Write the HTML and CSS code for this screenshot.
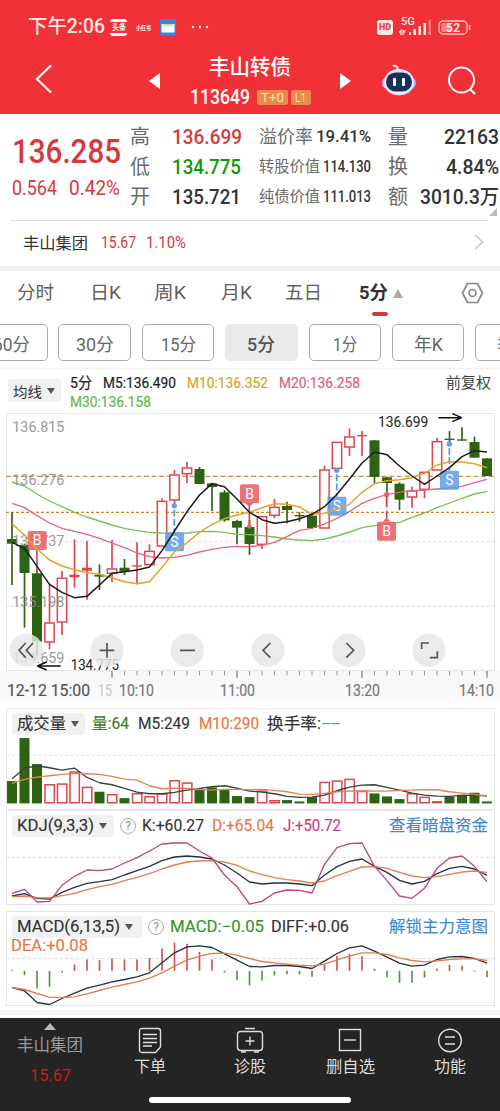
FILE: index.html
```html
<!DOCTYPE html>
<html lang="zh-CN">
<head>
<meta charset="utf-8">
<title>丰山转债 113649</title>
<link rel="stylesheet" href="styles.css">
</head>
<body>
<header class="top">
  <div class="status">
    <span class="clock" data-w="77">下午2:06</span>
    <span class="news"><b data-w="14">头条</b></span>
    <span class="mini" data-w="15">小红书</span>
    <svg class="app" width="16" height="16" viewBox="0 0 16 16"><rect width="16" height="16" rx="2" fill="#2b8be8"/><path d="M1.500 5h13v8.500h-13z" fill="#fff"/><path d="M2 3.500h12l-1 3.500h-10z" fill="#c9dccb"/><path d="M2 4h12" stroke="#3d7185" stroke-width="1.500"/></svg>
    <svg class="dots" width="18" height="4" viewBox="0 0 18 4" fill="#fff"><circle cx="2" cy="2" r="1.200"/><circle cx="9" cy="2" r="1.200"/><circle cx="16" cy="2" r="1.200"/></svg>
    <span class="hd"><b data-w="12">HD</b></span>
    <span class="signal"><i data-w="14">5G</i>
      <svg width="34" height="17" viewBox="0 0 34 17" fill="#ffe9e5"><path d="M0 13.500l2-2v4.500M4 16v-4.500l2 2M7 11.500h-1" fill="none" stroke="#ffe9e5" stroke-width="1.200"/><path d="M10 13h2v3h-2zM14.500 10h2.500v6h-2.500zM19.500 7h2.500v9h-2.500zM24.500 4h2.500v12h-2.500z"/><path d="M29.500 1h2.500v15h-2.500z" opacity=".4"/></svg>
    </span>
    <svg class="battery" width="33" height="15" viewBox="0 0 33 15"><rect x="1" y="1" width="28" height="13" rx="4" fill="none" stroke="#ffc9c5" stroke-width="1.300"/><path d="M5 3h8v9h-8q-2 0-2-2v-5q0-2 2-2z" fill="#ff7c7c"/><path d="M31.500 5v5" stroke="#ffc9c5" stroke-width="1.500"/><text x="8" y="12" font-size="12" font-weight="500" fill="#fff" textLength="14">52</text></svg>
  </div>
  <div class="nav">
    <svg class="back" width="17" height="30" viewBox="0 0 17 30"><path d="M16 1.500L2 15l14 13.500" fill="none" stroke="#fff" stroke-width="2.200"/></svg>
    <svg class="prev" width="11" height="16" viewBox="0 0 11 16"><path d="M11 0v16L0 8z" fill="#fff"/></svg>
    <div class="title">
      <h1 data-w="82">丰山转债</h1>
      <div class="code"><span class="num" data-w="60">113649</span><span class="tag t0"><b data-w="23">T+0</b></span><span class="tag l1"><b data-w="11">L1</b></span></div>
    </div>
    <svg class="next" width="11" height="16" viewBox="0 0 11 16"><path d="M0 0v16l11-8z" fill="#fff"/></svg>
    <svg class="robot" width="34" height="32" viewBox="0 0 34 32"><path d="M11 2q4-1 5 3" fill="none" stroke="#eee" stroke-width="2"/><ellipse cx="3.500" cy="19" rx="3.500" ry="5" fill="#d7b9f5"/><ellipse cx="30.500" cy="19" rx="3.500" ry="5" fill="#b6a4f4"/><ellipse cx="17" cy="18" rx="15" ry="13" fill="#f3f1fc"/><ellipse cx="17" cy="19" rx="15" ry="12" fill="none" stroke="#d7d1f4"/><rect x="4" y="8.500" width="26" height="19" rx="9.500" fill="#17315f"/><rect x="11" y="14" width="3" height="8" rx="1" fill="#fff"/><rect x="20" y="14" width="3" height="8" rx="1" fill="#fff"/></svg>
    <svg class="search" width="28" height="29" viewBox="0 0 28 29" fill="none" stroke="#fff" stroke-width="2"><circle cx="13.500" cy="14" r="12.500"/><path d="M22 23l5 5"/></svg>
  </div>
</header>

<section class="quote">
  <div class="last"><strong data-w="109">136.285</strong><div class="chg"><span data-w="45">0.564</span><span data-w="51">0.42%</span></div></div>
  <dl class="pairs hl"><dt>高</dt><dd class="red"><span data-w="70">136.699</span></dd><dt>低</dt><dd class="green"><span data-w="69">134.775</span></dd><dt>开</dt><dd><span data-w="69">135.721</span></dd></dl>
  <dl class="pairs value"><dt class="wide"><span data-w="54">溢价率</span></dt><dd><span data-w="55">19.41%</span></dd><dt><span data-w="61">转股价值</span></dt><dd><span data-w="48">114.130</span></dd><dt><span data-w="61">纯债价值</span></dt><dd><span data-w="48">111.013</span></dd></dl>
  <dl class="pairs flow"><dt>量</dt><dd><span data-w="55">22163</span></dd><dt>换</dt><dd><span data-w="53">4.84%</span></dd><dt>额</dt><dd><span data-w="79">3010.3万</span></dd></dl>
  <i class="corner"></i>
</section>
<section class="related"><span class="name" data-w="65">丰山集团</span><span class="p" data-w="35">15.67</span><span class="p" data-w="40">1.10%</span><svg width="10" height="16" viewBox="0 0 10 16"><path d="M1 1l7.500 7L1 15" fill="none" stroke="#c4c4c4" stroke-width="1.500"/></svg></section>

<nav class="tabs"><span data-w="37">分时</span><span data-w="31">日K</span><span data-w="32">周K</span><span data-w="31">月K</span><span data-w="37">五日</span><span class="on" data-w="29">5分</span><svg width="10" height="9" viewBox="0 0 10 9"><path d="M5 0l5 9H0z" fill="#aaa"/></svg><svg width="23" height="22" viewBox="0 0 23 22" fill="none" stroke="#888" stroke-width="1.700"><path d="M6.500 1.500h10l5 9.500-5 9.500h-10L1.500 11z" stroke-linejoin="round"/><circle cx="11.500" cy="11" r="3.500"/></svg></nav>
<div class="underline"></div>
<div class="chips"><span><b data-w="37">60分</b></span><span><b data-w="38">30分</b></span><span><b data-w="35">15分</b></span><span class="on"><b data-w="28">5分</b></span><span><b data-w="24">1分</b></span><span><b data-w="29">年K</b></span><span><b data-w="29">季K</b></span></div>

<section class="ma"><span class="pick"><b data-w="29">均线</b><i></i></span>
  <div class="legend"><span data-w="22">5分</span><span data-w="73">M5:136.490</span><span class="gold" data-w="81">M10:136.352</span><span class="pink" data-w="81">M20:136.258</span><span class="lime" data-w="81">M30:136.158</span></div>
  <span class="adj" data-w="45">前复权</span>
</section>

<div class="panel main"><svg id="price" viewBox="18 24 1467 774"></svg></div>
<div class="axis"><svg id="ticks" width="500" height="9" viewBox="0 0 1500 27"></svg><div class="times"><span class="dark" data-w="83">12-12 15:00</span><span class="faint" data-w="14">15</span><span data-w="35">10:10</span><span data-w="35">11:00</span><span data-w="35">13:20</span><span data-w="35">14:10</span></div></div>

<div class="panel vol"><svg id="volume" viewBox="18 24 1467 304"></svg>
  <div class="head"><span class="pick"><b data-w="49">成交量</b><i></i></span><span class="green2" data-w="37">量:64</span><span class="m5" data-w="52">M5:249</span><span class="orange" data-w="60">M10:290</span><span class="turn" data-w="54">换手率:</span><span class="blue" data-w="18">--</span></div></div>
<div class="panel kdj"><svg id="kdj" viewBox="18 13 1467 285"></svg>
  <div class="head"><span class="pick"><b data-w="77">KDJ(9,3,3)</b><i></i></span><span class="q">?</span><span data-w="62">K:+60.27</span><span class="orange" data-w="62">D:+65.04</span><span class="magenta" data-w="58">J:+50.72</span><span class="link" data-w="99">查看暗盘资金</span></div></div>
<div class="panel macd"><svg id="macd" viewBox="18 318 1467 284"></svg>
  <div class="head"><span class="pick"><b data-w="103">MACD(6,13,5)</b><i></i></span><span class="q">?</span><span class="green3" data-w="94">MACD:−0.05</span><span data-w="78">DIFF:+0.06</span><span class="link" data-w="99">解锁主力意图</span><span class="orange dea" data-w="77">DEA:+0.08</span></div></div>

<div class="band"></div>
<footer class="bar">
  <div class="stock"><i class="up"></i><span data-w="66">丰山集团</span><em data-w="41">15.67</em></div>
  <div class="item"><svg width="24" height="27" viewBox="0 0 24 27"><path d="M4 1.500h16q2.500 0 2.500 2.500v16l-5 5.500h-13.500q-2.500 0-2.500-2.500v-19q0-2.500 2.500-2.500zM5 7.500h14M5 11.500h14M5 15.500h14M5 19h9"/></svg><span data-w="32">下单</span></div>
  <div class="item"><svg width="28" height="27" viewBox="0 0 28 27"><rect x="1.500" y="4.500" width="25" height="19" rx="3"/><path d="M9 1.500h10M5 25h5M18 25h5M14 9.500v9M9.500 14h9"/></svg><span data-w="32">诊股</span></div>
  <div class="item"><svg width="24" height="27" viewBox="0 0 24 27"><rect x="1.500" y="2.500" width="21" height="21"/><path d="M6 13h12"/></svg><span data-w="49">删自选</span></div>
  <div class="item"><svg width="26" height="27" viewBox="0 0 26 27"><circle cx="13" cy="13.500" r="11.300"/><path d="M8 10h10M8 17h10"/></svg><span data-w="32">功能</span></div>
  <i class="home"></i>
</footer>
<script src="charts.js"></script>
</body>
</html>
```
FILE: styles.css
```css
* { box-sizing: border-box; }
body { margin: 0; width: 500px; height: 1111px; overflow: hidden; background: #fff; color: #333; font-family: Roboto, "Noto Sans CJK SC", sans-serif; }
h1, dl, dd { margin: 0; }
i, em { font-style: normal; }
b { font-weight: inherit; }
svg { display: block; flex: none; }
[data-w] { display: inline-block; white-space: nowrap; transform-origin: 0 50%; flex: none; }
.red { color: #d43a40; }
.green { color: #0a9d0a; }
.green2 { color: #3d7a1c; }
.green3 { color: #34962a; }
.orange { color: #ec7440; }
.magenta { color: #c43c83; }
.blue { color: #44a0dc; }
.gold { color: #d9a51c; }
.pink { color: #e2617d; }
.lime { color: #63b946; }

.top { height: 114px; background: #f23037; color: #fff; }
.status { display: flex; align-items: center; height: 54px; padding-left: 28px; }
.clock { font-size: 19.5px; line-height: 24px; color: #ffe9e7; font-weight: 500; }
.news { width: 17px; height: 17px; margin-left: 5px; padding: 5px 1px 0 2px; border-top: 3px solid #fff; border-bottom: 3px solid #fff; border-radius: 3px; font-size: 8px; line-height: 1px; font-weight: 700; }
.mini { margin-left: 9px; font-size: 6px; font-weight: 700; }
.app { margin-left: 9px; }
.dots { margin-left: 15px; }
.hd { width: 16px; margin-left: 168px; padding: 0 2px; height: 15px; border-radius: 3px; background: #ffe9e5; color: #ed3d42; font-size: 9px; line-height: 15px; font-weight: 900; }
.signal { display: grid; margin-left: 6px; }
.signal > * { grid-area: 1 / 1; }
.signal i { margin-top: -1px; margin-left: 2px; font-size: 10px; line-height: 9px; height: 9px; color: #ffe9e5; font-weight: 500; }
.signal svg { margin-top: 1px; }
.battery { margin-left: 5px; }
.nav { display: grid; grid-template-columns: 114px 40px 151px 42px 66px 28px; padding-left: 35px; height: 60px; }
.back { margin-top: 10px; }
.prev, .next { margin-top: 19px; }
.title { width: 122px; text-align: center; }
h1 { font-size: 21px; line-height: 26px; font-weight: 500; }
.code { display: flex; align-items: center; height: 34px; padding-left: 1px; }
.num { font-size: 19.500px; font-weight: 500; }
.tag { display: flex; height: 15px; background: #e9894a; color: #ffe0ad; border-radius: 2px; font-size: 13px; line-height: 15px; padding-left: 4px; }
.t0 { width: 31px; margin-left: 7px; }
.l1 { width: 20px; margin-left: 3px; }
.robot { margin-top: 10px; }
.search { margin-top: 12px; }

.quote { position: relative; display: grid; grid-template-columns: 130px 129px 129px 112px; height: 106px; }
.last { padding: 16px 0 0 12px; color: #d9363d; }
.last strong { font-size: 34px; line-height: 42px; font-weight: 500; }
.chg { display: flex; gap: 12px; font-size: 20px; line-height: 32px; font-weight: 400; }
.pairs { display: grid; align-content: start; grid-auto-rows: 30px; padding-top: 8px; line-height: 30px; }
.pairs dt { color: #6a6a6a; font-size: 20px; font-weight: 400; }
.pairs dd { font-size: 20px; font-weight: 500; }
.hl { grid-template-columns: 42px 1fr; }
.value { grid-template-columns: 64px 48px; }
.value dt { font-size: 15.500px; }
.value .wide { font-size: 18px; }
.value dd { display: flex; justify-content: flex-end; font-size: 16px; }
.flow { grid-template-columns: 20px 91px; }
.flow dd { display: flex; justify-content: flex-end; }
.corner { position: absolute; right: 3px; bottom: 4px; border-left: 8px solid transparent; border-bottom: 8px solid #bbb; }
.related { display: flex; align-items: center; margin: 0 12px 0 10px; height: 46px; border-top: 1px solid #ddd; padding: 0 4px 3px 13px; }
.name { font-size: 16px; }
.p { margin-left: 13px; font-size: 16px; color: #d43a40; }
.p + .p { margin-left: 10px; }
.related svg { margin-left: auto; }

.tabs { display: grid; align-items: center; grid-template-columns: 73px 64px 67px 64px 74px 34px 68px 24px; height: 46px; padding: 3px 0 0 17px; border-top: 5px solid #f2f2f2; font-size: 18.5px; line-height: 24px; color: #606060; }
.tabs .on { font-weight: 700; color: #333; }
.underline { width: 16px; height: 4px; margin-left: 372px; border-radius: 2px; background: #c93941; }
.chips { display: flex; gap: 10.900px; margin-top: 8px; height: 37px; overflow: hidden; }
.chips > span { display: flex; justify-content: center; align-items: center; flex: none; width: 72.500px; border: 1px solid #aaa; border-radius: 5px; font-size: 18px; color: #666; }
.chips > span:first-child { margin-left: -25px; }
.chips > .on { background: #eaeaea; border-color: #eaeaea; font-weight: 500; color: #555; }

.ma { display: flex; margin-top: 7px; height: 45px; border-top: 1px solid #f0f0f0; padding: 5px 9px 0 8px; color: #222; }
.pick { display: flex; align-items: center; flex: none; height: 23px; padding-left: 5px; background: #f1f1f1; border-radius: 3px; color: #333; }
.pick i { margin-left: 5px; border: 4.500px solid transparent; border-top: 6px solid #555; border-bottom: 0; }
.ma .pick { width: 53px; margin-top: 5px; font-size: 14px; }
.legend { display: flex; flex-wrap: wrap; align-content: flex-start; column-gap: 11px; width: 330px; margin-left: 9px; height: 38px; font-size: 15px; line-height: 19px; }
.legend span { -webkit-text-stroke: .2px currentColor; }
.adj { margin-left: auto; font-size: 15px; line-height: 19px; color: #444; }
.panel { display: grid; width: 489px; margin-left: 6px; overflow: hidden; box-shadow: inset 0 0 0 1px #e6e6e6; }
.panel > * { grid-area: 1 / 1; }
.panel > svg { width: 489px; height: 100%; }
.main { height: 258px; }
.axis { height: 37px; background: linear-gradient(#f7f7f7, #fbfbfb 29px, #fff 30px); }
.times { display: flex; font-size: 16px; line-height: 21px; color: #777; padding-left: 7px; font-weight: 400; -webkit-text-stroke: .2px currentColor; }
.dark { color: #555; }
.faint { color: #ccc; margin-left: 8px; }
.times span:nth-child(3) { margin-left: 7px; }
.times span:nth-child(4) { margin-left: 66px; }
.times span:nth-child(5) { margin-left: 90px; }
.times span:nth-child(6) { margin-left: 79px; }
.vol { height: 101.500px; }
.kdj { height: 95px; margin-bottom: 6.500px; }
.macd { height: 95px; }
.head { display: flex; flex-wrap: wrap; align-content: flex-start; align-items: center; padding: 5px 7px 0 6px; font-size: 16px; line-height: 22px; height: 46px; }
.head .pick { font-size: 16px; height: 22px; }
.head > span { -webkit-text-stroke: .15px currentColor; }
.vol .pick { width: 73px; margin-right: 7px; }
.vol .m5, .vol .orange { margin-left: 9px; }
.vol .turn { margin-left: 8px; }
.vol .blue { margin-left: 1px; }
.kdj .pick { width: 102px; margin-right: 6px; }
.macd .pick { width: 130px; margin-right: 6px; }
.q { width: 16px; height: 16px; border: 1px solid #aaa; border-radius: 50%; text-align: center; font-size: 12px; line-height: 14px; color: #999; margin-right: 6px; }
.kdj .orange { margin-left: 8px; }
.kdj .magenta { margin-left: 9px; }
.green3 + span { margin-left: 7px; }
.head .link { margin-left: auto; color: #3f88cf; }
.dea { line-height: 16px; margin-left: -1px; }

.band { height: 5px; margin-top: 4px; background: #f3f3f3; }
.bar { position: relative; display: grid; grid-template-columns: repeat(5, 100px); height: 93px; margin-top: 3px; background: #242424; color: #ddd; }
.bar > div { display: flex; flex-direction: column; align-items: center; }
.up { margin-top: 5px; border: 6px solid transparent; border-bottom: 7px solid #bbb; border-top: 0; }
.stock span { margin-top: 4px; color: #999; font-size: 16.500px; line-height: 24px; }
.stock em { margin-top: 5px; color: #c41b1b; font-size: 17px; line-height: 24px; }
.item svg { margin-top: 9px; fill: none; stroke: #ddd; stroke-width: 1.400; }
.item span { margin-top: 1px; font-size: 16px; line-height: 24px; }
.home { position: absolute; left: 149px; top: 79px; width: 202px; height: 6px; border-radius: 3px; background: #fff; }
```
FILE: charts.js
```javascript
// Squeeze each label to its column width while keeping the flow box in step.
document.querySelectorAll('[data-w]').forEach(function (el) {
  var w = +el.dataset.w, range = document.createRange();
  range.selectNodeContents(el);
  var n = range.getBoundingClientRect().width;
  el.style.width = n + 'px';
  el.style.marginRight = (w - n) + 'px';
  el.style.transform = 'scaleX(' + w / n + ')';
});

// Chart space: three units per pixel, one slot every 37.5 units.
var RED = '#dc4650', GREEN = '#2d6412';
function X(i) { return 36 + 37.5 * i; }
function rect(x, y, w, h, a) { return '<rect x="' + x + '" y="' + y + '" width="' + w + '" height="' + h + '" ' + a + '/>'; }
function seg(x1, y1, x2, y2, c, w, d) { return '<path d="M' + x1 + ' ' + y1 + 'L' + x2 + ' ' + y2 + '" stroke="' + c + '" stroke-width="' + w + '"' + (d ? ' stroke-dasharray="' + d + '"' : '') + ' fill="none"/>'; }
function line(ys, c, w) { return '<polyline fill="none" stroke-linejoin="round" stroke="' + c + '" stroke-width="' + (w || 4) + '" points="' + ys.map(function (y, i) { return X(i) + ',' + y; }).join(' ') + '"/>'; }
function text(x, y, s, len, size, fill, extra) { return '<text x="' + x + '" y="' + y + '" font-size="' + size + '" fill="' + fill + '" textLength="' + len + '" lengthAdjust="spacingAndGlyphs" ' + (extra || '') + '>' + s + '</text>'; }

var candles = [
  ['g',322,402,416,540],['g',416,420,504,668],['g',495,505,710,755],['r',535,652,712,732],['r',498,518,652,690],
  ['r',403,509,517,548],['r',408,488,497,584],['g',478,509,515,555],['r',405,490,506,532],['g',462,488,500,510],
  ['r',412,481,485,538],['r',418,437,480,480],['r',280,287,424,424],['r',195,208,286,300],['r',170,187,207,234],
  ['g',186,192,237,237],['g',233,235,246,318],['g',255,262,346,350],['g',344,348,368,418],['g',345,366,417,450],
  ['r',333,333,419,432],['r',282,305,332,340],['g',290,303,315,355],['g',322,330,334,350],['g',325,332,369,369],
  ['r',182,193,370,370],['r',110,110,191,191],['r',70,94,127,153],['r',78,90,94,153],['g',105,106,216,235],
  ['g',215,217,234,270],['g',232,236,284,315],['r',245,256,277,308],['r',200,200,254,280],['r',98,108,196,196],
  ['g',78,101,105,115],['g',67,103,107,107],['g',95,111,158,158],['g',160,160,213,213]];
var p = '';
[409, 604].forEach(function (y) { p += seg(18, y, 1485, y, '#ddd', 3, '9 7'); });
p += seg(18, 214, 1485, 214, '#ca8a52', 3.5, '14 9') + seg(18, 322, 1485, 322, '#cf8427', 3.5, '9 6');
candles.forEach(function (c, i) {
  var x = X(i), k = c[0] === 'r' ? RED : GREEN, h = c[3] - c[2];
  if (c[0] === 'g' || h < 11) {
    p += seg(x, c[1], x, c[4], k, 5) + rect(x - 15, c[2], 30, h, 'fill="' + k + '"');
  } else {
    p += seg(x, c[1], x, c[2], k, 5) + seg(x, c[3], x, c[4], k, 5) + rect(x - 14, c[2] + 2, 28, h - 3, 'fill="#fff" stroke="' + k + '" stroke-width="4.500"');
  }
});
p += line([231,243,267,288,305,322,336,348,360,370,377,382,384,385,384,380,379,382,388,389,392,396,402,405,407,402,393,381,368,362,357,352,337,324,308,294,280,267,259], '#78c159');
p += line([295,308,332,354,370,379,388,400,414,428,444,455,459,457,451,441,433,427,424,425,421,412,395,376,370,357,340,320,295,280,268,262,257,255,252,249,244,233,223], '#df6681');
function badge(x, y, s, c) { return rect(x, y, 57, 57, 'rx="5" fill="' + c + '" opacity=".88"') + '<text x="' + (x + 28.5) + '" y="' + (y + 43) + '" text-anchor="middle" font-size="42" fill="#fff">' + s + '</text>'; }
var R = '#ec6066', B = '#5fa0ec';
[['136.815', 82], ['136.276', 241], ['135.737', 423], ['135.198', 606], ['134.659', 775]].forEach(function (t) {
  p += text(37, t[1], t[0], 156, 45, '#888', 'opacity=".85"');
});
p += seg(111, 434, 111, 500, RED, 5) + seg(748, 296, 748, 362, RED, 5) + '<path d="M736 294h24l-12 12zM1148 350h24l-12-12z" fill="' + R + '"/><circle cx="748" cy="364" r="7" fill="' + R + '"/><circle cx="1160" cy="269" r="8" fill="' + R + '"/>' + seg(1160, 275, 1160, 340, '#c83c45', 5, '32 10');
p += badge(83, 378, 'B', R) + badge(720, 238, 'B', R) + badge(1131, 350, 'B', R);
[[523, 302, 382], [1010, 196, 275], [1348, 117, 197]].forEach(function (s) {
  p += '<circle cx="' + s[0] + '" cy="' + s[1] + '" r="8" fill="' + B + '"/>' + seg(s[0], s[1] + 12, s[0], s[2], '#4c95e0', 5, '20 8') + badge(s[0] - 28, s[2], 'S', B);
});
p += line([356,390,432,465,483,494,503,508,518,530,536,530,487,440,413,382,358,341,330,322,308,296,298,306,328,325,313,298,262,236,227,224,218,205,180,170,171,176,188], '#dfa52b', 4.5);
p += line([412,430,484,538,562,578,574,540,505,500,495,486,437,378,320,270,236,245,282,322,344,355,350,341,328,305,268,222,174,141,149,183,213,238,213,188,155,137,141], '#1c1c1c', 4.5);
p += text(212, 795, '134.775', 145, 42, '#222') + text(1134, 65, '136.699', 151, 42, '#222');
p += '<path d="M182 783H112l28-12M112 783l28 12M1315 38h70l-28-12M1385 38l-28 12" fill="none" stroke="#111" stroke-width="4.500"/>';
[79, 321, 562, 804, 1046, 1287].forEach(function (x) { p += '<circle cx="' + x + '" cy="736" r="50" fill="#e8e8e8" opacity=".85"/>'; });
p += '<path d="M77 714l-20 22 20 22M99 714l-20 22 20 22M299 736h44M321 714v44M540 736h45M811 714l-22 22 22 22M1039 714l22 22-22 22M1265 732v-18h22M1312 739v19h-22" fill="none" stroke="#555" stroke-width="5"/>';
document.getElementById('price').innerHTML = p;

var t = '';
for (var i = 8; i < 39; i++) t += seg(X(i), 0, X(i), i % 10 === 8 ? 20 : 13, '#999', i % 10 === 8 ? 5 : 3);
document.getElementById('ticks').innerHTML = t;

var vols = 'g243 g114 g192 r252 r250 r214 r260 g275 r282 g294 r279 r288 r280 r240 r247 g270 g262 g270 g288 g291 r271 r300 g300 g304 g291 r245 r241 r236 r272 g280 g289 g297 r279 r290 r303 g290 g284 g278 g304'.split(' ');
var v = seg(18, 166, 1485, 166, '#e4e4e4', 3, '9 7');
vols.forEach(function (s, i) {
  var y = +s.slice(1), h = 310 - y;
  v += s[0] === 'g' || h < 8 ? rect(X(i) - 15, y, 30, h, 'fill="' + (s[0] === 'g' ? GREEN : RED) + '"') : rect(X(i) - 13.5, y + 2, 28, h - 4, 'fill="#fff" stroke="' + RED + '" stroke-width="4.500"');
});
v += line([236,205,197,203,210,204,232,248,254,265,276,281,281,277,270,265,260,257,264,273,276,281,289,292,291,285,272,261,255,254,262,270,279,285,288,289,286,286,287], '#36423f');
v += line([250,238,231,227,223,220,221,223,229,237,240,257,266,264,265,268,270,268,268,269,268,271,275,282,283,280,275,273,272,273,273,271,270,269,269,275,279,283,288], '#ea8050');
document.getElementById('volume').innerHTML = v;

document.getElementById('kdj').innerHTML = seg(18, 155, 1485, 155, '#ddd', 3, '9 7') +
  line([271,264,278,280,260,245,233,228,222,208,195,182,165,154,151,154,160,178,202,229,235,232,232,235,240,208,183,167,160,182,200,224,235,227,204,188,182,190,209], '#26323c') +
  line([273,271,276,277,270,263,252,243,236,225,215,204,190,178,169,166,165,169,179,196,207,216,222,226,232,226,210,197,184,183,188,200,211,216,213,206,199,196,200], '#e57e4d') +
  line([263,251,289,287,239,212,193,195,190,172,156,136,115,112,112,136,157,208,243,295,287,262,253,254,262,176,126,114,112,182,225,271,278,248,188,157,151,182,228], '#be4582');

var bars = [494,510,550,545,502,478,463,465,460,463,463,458,430,412,416,440,463,502,525,541,526,511,507,508,515,478,452,446,453,491,516,533,533,517,490,479,482,500,516];
document.getElementById('macd').innerHTML = seg(18, 460, 1485, 460, '#ddd', 3, '9 7') +
  bars.map(function (y, i) { return seg(X(i), y, X(i), 497, y < 497 && i ? '#cf5151' : '#4a9c3c', 5); }).join('') +
  line([547,557,592,598,580,564,549,540,530,523,515,503,473,443,425,422,427,446,465,484,485,481,481,484,490,468,445,428,422,438,456,474,483,480,463,455,454,460,474], '#26323c') +
  line([547,553,565,576,577,575,566,556,546,538,530,519,503,483,465,453,445,444,450,460,469,473,477,480,482,477,464,453,443,443,448,458,466,470,467,463,461,461,466], '#e57e4d');
```
